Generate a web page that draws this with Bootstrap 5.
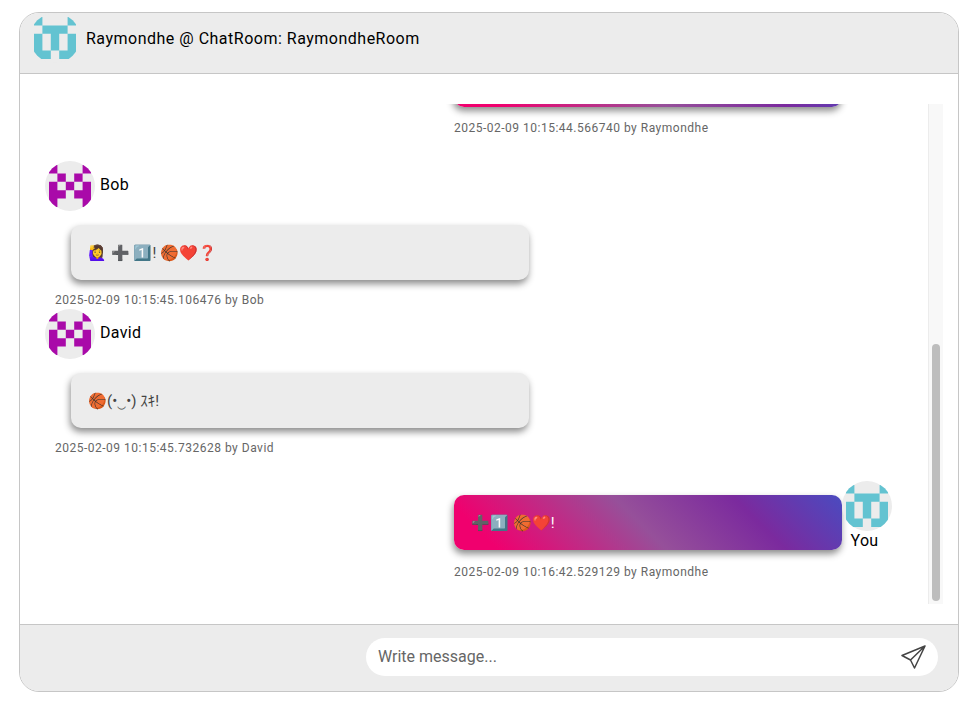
<!DOCTYPE html>
<html lang="en"><head><meta charset="utf-8"><title>ChatRoom</title>
<link href="https://cdn.jsdelivr.net/npm/bootstrap@5.3.0/dist/css/bootstrap.min.css" rel="stylesheet">
<style>
html,body{height:100%;background:#fff;}
body{font-family:Roboto,"Noto Sans CJK JP",sans-serif;padding:12px 17px 16px 19px;overflow:hidden;}
.chat-shell{height:680px;width:940px;border:1px solid #c6c6c6;border-radius:20px;overflow:hidden;background:#fff;}
.chat-top{height:61px;background:#ececec;border-bottom:1px solid #c6c6c6;padding:0 0 10px 10px;font-size:16px;letter-spacing:.5px;color:#000;gap:6px;}
.chat-top span{padding-top:2px;}
.chat-mid{height:550px;padding:30px 30px 20px 0;}
.chat-scroll{height:500px;overflow-y:auto;scrollbar-width:none;padding:0 36px 0 25px;}
.track-rail{top:30px;right:15px;width:15px;height:500px;background:#f8f8f8;border-left:1px solid #ececec;}
.track-thumb{top:240px;left:3px;width:8px;height:257px;background:#bdbdbd;border-radius:4px;}
.hist-gap{height:400px;}
.face{width:50px;height:50px;flex:none;border-radius:50%;background:#ececec;display:block;}
.who{font-size:16px;letter-spacing:.3px;color:#000;line-height:20px;}
.who-row{gap:5px;}
.who-row .who{padding-bottom:3px;}
.bubble{height:55px;border-radius:10px;padding:1px 0 0 17px;font-size:15px;color:#444;box-shadow:-1px 4px 7px rgba(0,0,0,.45);}
.bubble-in{width:458px;margin:14px 0 0 26px;background:#ececec;}
.bubble-out{width:388px;margin-top:14px;background:linear-gradient(45deg,#f0006e 10%,#96509a 48%,#7b2a9e 75%,#4a4bc0 100%);color:#fff;}
.stamp{font-size:12px;letter-spacing:.5px;color:#666;line-height:16px;}
.stamp-in{margin:12px 0 0 10px;height:17px;}
.stamp-out{margin-top:13px;}
.you-name{padding-right:5px;}
.msg-out{width:438px;margin-left:auto;}
.msg-gap-a{height:25px;}
.msg-gap-b{height:24px;}
.you-col{width:50px;}
.chat-foot{height:67px;background:#ececec;border-top:1px solid #c6c6c6;padding:13px 20px 0 0;}
.composer{width:572px;height:38px;border-radius:19px;background:#fff;padding:0 12px 0 10px;}
.composer input{border:0;outline:0;flex:1;font-size:16px;background:transparent;font-family:inherit;}
.composer input::placeholder{color:#666;}
</style></head>
<body>
<div class="chat-shell d-flex flex-column">
  <div class="chat-top d-flex align-items-center">
    <svg class="face" viewBox="0 0 50 50"><g fill="#63c3d1"><path d="M4 4h8.400v8.400H4zM37.600 4H46v8.400h-8.400zM12.400 12.400h25.200v8.400H12.400zM4 20.800h8.400v16.800H4zM20.800 20.800h8.400v16.800h-8.400zM37.600 20.800H46v16.800h-8.400zM4 37.600h16.800V46H4zM29.200 37.600H46V46H29.200z"/></g></svg>
    <span>Raymondhe @ ChatRoom: RaymondheRoom</span>
  </div>
  <div class="chat-mid position-relative">
    <div class="chat-scroll" id="log">
      <div class="hist-gap"></div>
      <div class="msg-out">
        <div class="bubble bubble-out"></div>
        <div class="stamp stamp-out">2025-02-09 10:15:44.566740 by Raymondhe</div>
      </div>
      <div class="msg-gap-a"></div>
      <div class="who-row d-flex align-items-center">
        <svg class="face" viewBox="0 0 50 50"><g fill="#a90aa9"><path d="M4 4h8.400v8.400H4zM37.600 4H46v8.400h-8.400zM12.400 12.400h8.400v8.400h-8.400zM29.200 12.400h8.400v8.400h-8.400zM4 20.800h8.400v8.400H4zM20.800 20.800h8.400v8.400h-8.400zM37.600 20.800H46v8.400h-8.400zM4 29.200h16.800v8.400H4zM29.200 29.200H46v8.400H29.200zM4 37.600h8.400V46H4zM37.600 37.600H46V46h-8.400z"/></g></svg>
        <span class="who">Bob</span>
      </div>
      <div class="bubble bubble-in d-flex align-items-center">🙋‍♀️ ➕ 1️⃣! 🏀❤️❓</div>
      <div class="stamp stamp-in">2025-02-09 10:15:45.106476 by Bob</div>
      <div class="who-row d-flex align-items-center">
        <svg class="face" viewBox="0 0 50 50"><g fill="#a90aa9"><path d="M4 4h8.400v8.400H4zM37.600 4H46v8.400h-8.400zM12.400 12.400h8.400v8.400h-8.400zM29.200 12.400h8.400v8.400h-8.400zM4 20.800h8.400v8.400H4zM20.800 20.800h8.400v8.400h-8.400zM37.600 20.800H46v8.400h-8.400zM4 29.200h16.800v8.400H4zM29.200 29.200H46v8.400H29.200zM4 37.600h8.400V46H4zM37.600 37.600H46V46h-8.400z"/></g></svg>
        <span class="who">David</span>
      </div>
      <div class="bubble bubble-in d-flex align-items-center">🏀(•‿•) ｽｷ!</div>
      <div class="stamp stamp-in">2025-02-09 10:15:45.732628 by David</div>
      <div class="msg-gap-b"></div>
      <div class="msg-out">
        <div class="d-flex">
          <div class="bubble bubble-out flex-shrink-0 d-flex align-items-center">➕1️⃣ 🏀❤️!</div>
          <div class="you-col text-center"><svg class="face" viewBox="0 0 50 50"><g fill="#63c3d1"><path d="M4 4h8.400v8.400H4zM37.600 4H46v8.400h-8.400zM12.400 12.400h25.200v8.400H12.400zM4 20.800h8.400v16.800H4zM20.800 20.800h8.400v16.800h-8.400zM37.600 20.800H46v16.800h-8.400zM4 37.600h16.800V46H4zM29.200 37.600H46V46H29.200z"/></g></svg><span class="who you-name d-block">You</span></div>
        </div>
        <div class="stamp stamp-out">2025-02-09 10:16:42.529129 by Raymondhe</div>
      </div>
      <div class="msg-gap-b"></div>
    </div>
    <div class="track-rail position-absolute"><div class="track-thumb position-absolute"></div></div>
  </div>
  <div class="chat-foot d-flex justify-content-end">
    <div class="composer d-flex align-items-center">
      <input type="text" placeholder="Write message..." aria-label="Write message">
      <svg width="26" height="24" viewBox="0 0 26 24" fill="none" stroke="#444" stroke-width="1.5" stroke-linejoin="round"><path d="M25 1 2 10.500l8.500 4.500 4 8L25 1ZM10.500 15 25 1"/></svg>
    </div>
  </div>
</div>
<script src="https://cdn.jsdelivr.net/npm/bootstrap@5.3.0/dist/js/bootstrap.bundle.min.js"></script>
<script>var l=document.getElementById('log');l.scrollTop=l.scrollHeight;</script>
</body></html>
